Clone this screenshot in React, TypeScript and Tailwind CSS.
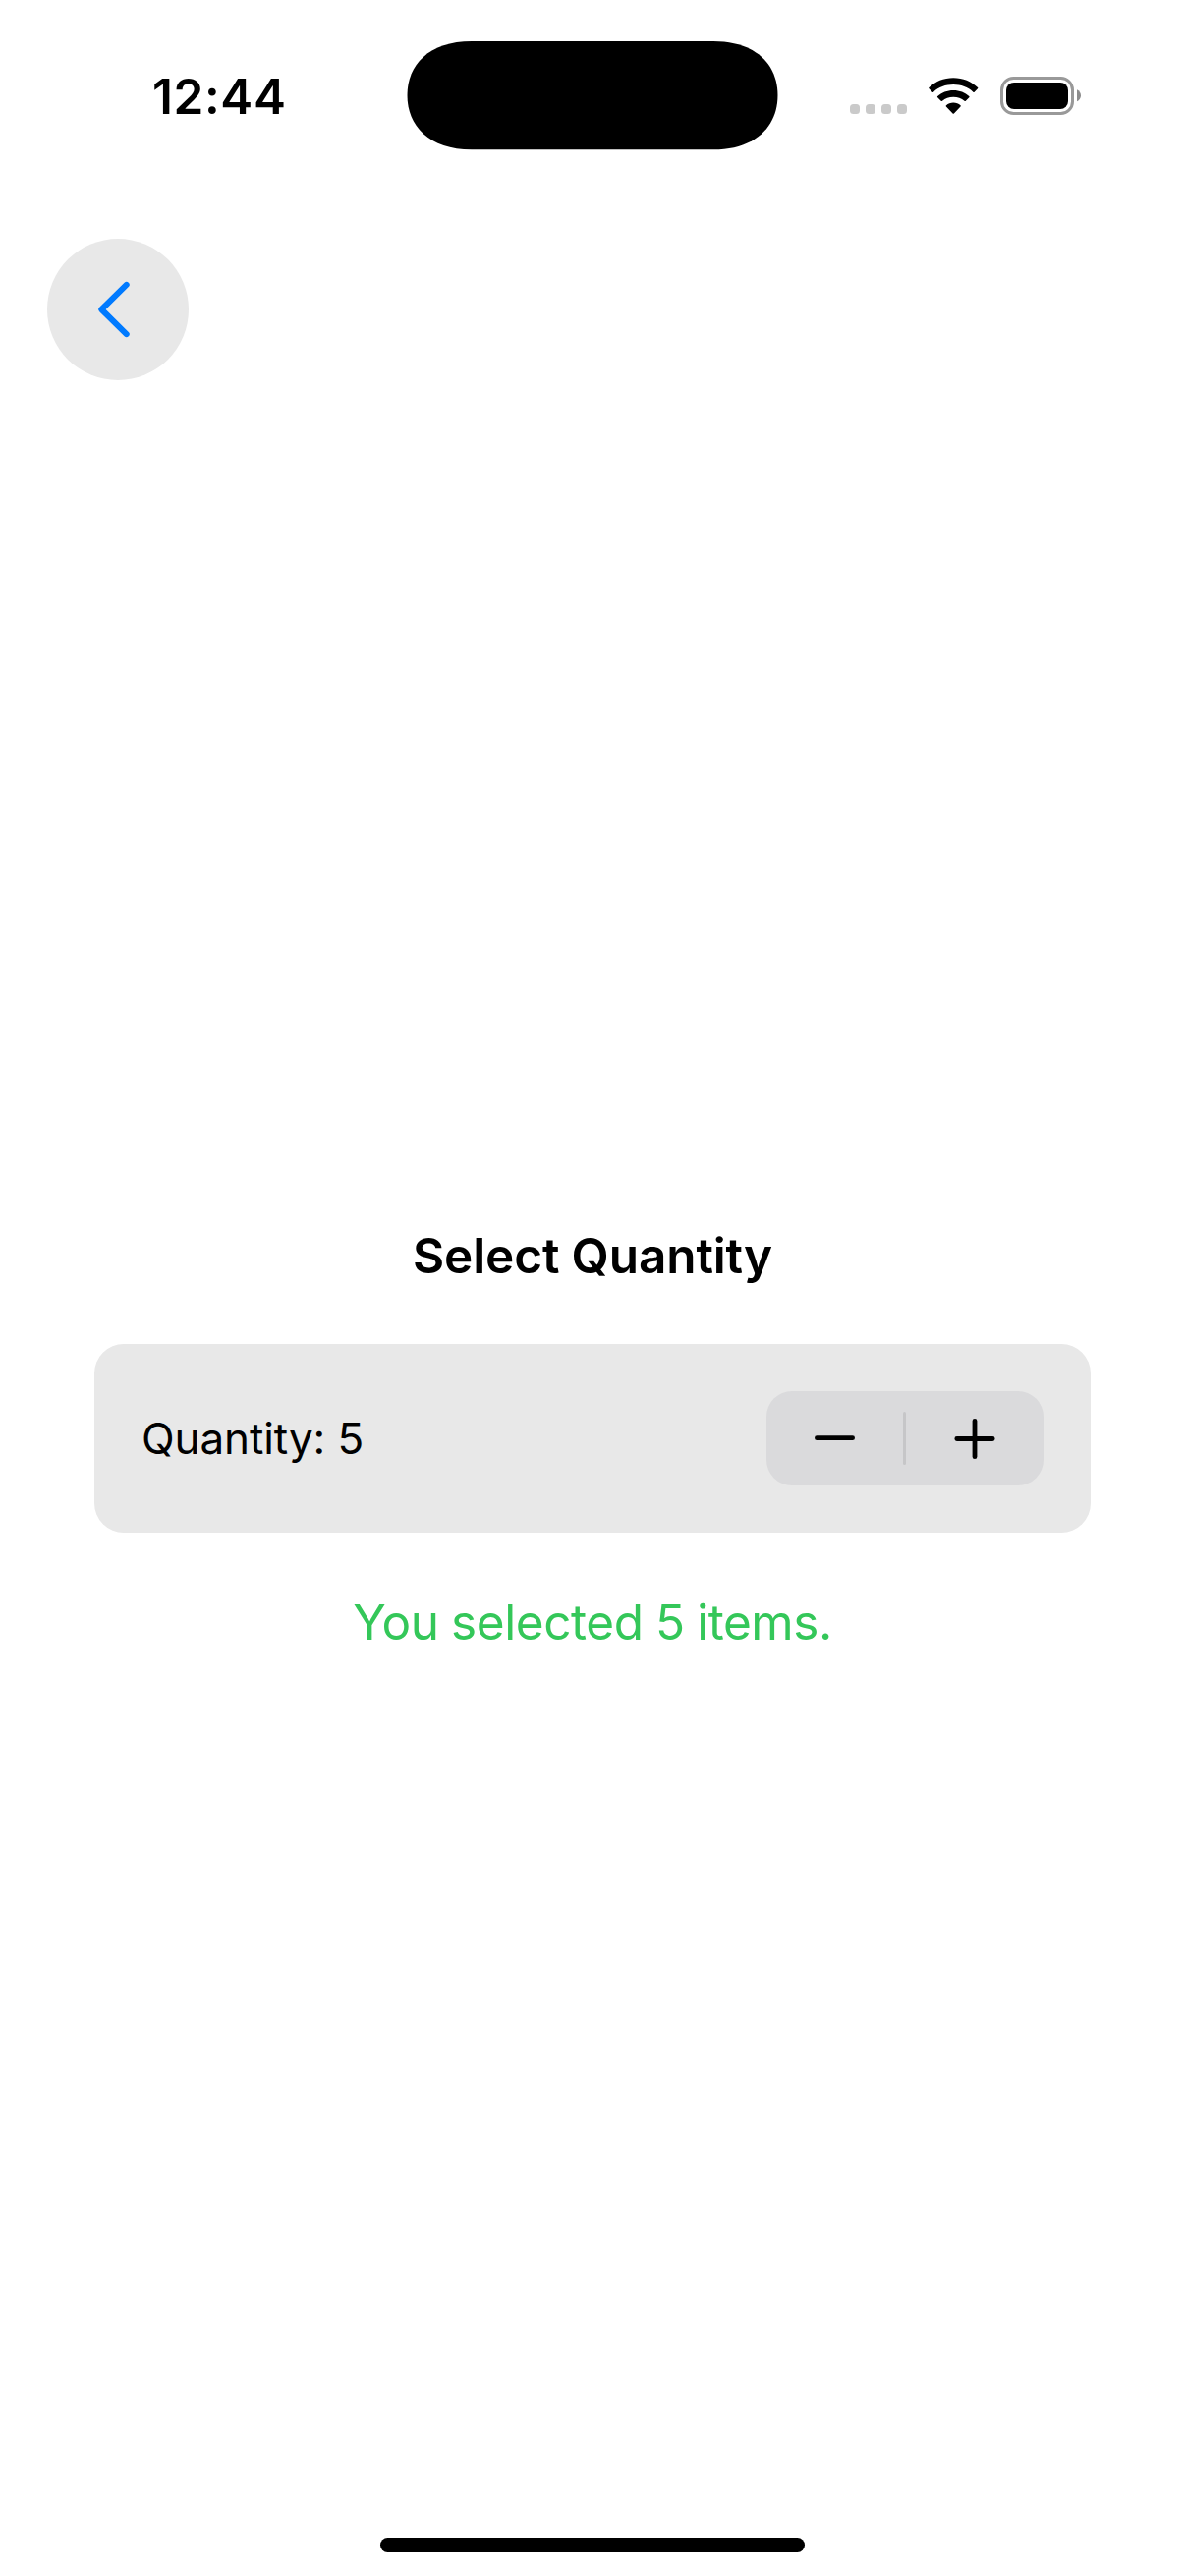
import { useState } from "react";

function SignalDots() {
  return (
    <div className="mt-[27px] flex gap-[6px]">
      {[0, 1, 2, 3].map((dot) => (
        <span key={dot} className="size-[10px] rounded-[3.5px] bg-[#cacaca]" />
      ))}
    </div>
  );
}

function WifiIcon() {
  return (
    <svg width="51" height="39" viewBox="0 -0.6 51 39" fill="#000">
      <path d="M25.2 0.7C35 0.7 43.7 4.4 50 10.5Q50.6 11.1 50 11.7L46.6 15.1Q46 15.7 45.4 15.1C40.1 10.2 33 7.5 25.2 7.5S10.3 10.2 5 15.1Q4.4 15.7 3.8 15.1L0.5 11.7Q-0.1 11.1 0.5 10.5C6.8 4.4 15.4 0.7 25.2 0.7Z" />
      <path d="M25.2 13.4C31.5 13.4 37.2 15.7 41.3 19.4Q42 20 41.3 20.7L37.8 24.1Q37.2 24.7 36.5 24.1C33.5 21.6 29.6 20.2 25.2 20.2S17 21.6 14 24.1Q13.3 24.7 12.7 24.1L9.2 20.7Q8.5 20 9.2 19.4C13.3 15.7 19 13.4 25.2 13.4Z" />
      <path d="M25.2 26C28.1 26 30.6 27 32.5 28.6Q33.2 29.2 32.5 29.9L25.9 36.9Q25.2 37.6 24.6 36.9L17.9 29.9Q17.3 29.2 18 28.6C19.9 27 22.4 26 25.2 26Z" />
    </svg>
  );
}

function BatteryIcon() {
  return (
    <svg width="83" height="39" viewBox="0 0 83 39">
      <rect x="1.5" y="1.5" width="72" height="36" rx="12" fill="none" stroke="#999" strokeWidth="3" />
      <rect x="6" y="6" width="63" height="27" rx="8" fill="#000" />
      <path d="M78 13.3C80.5 14.5 82 16.8 82 19.3S80.5 24.1 78 25.3Z" fill="#8c8c8c" />
    </svg>
  );
}

function StatusBar() {
  return (
    <header className="grid h-[195px] grid-cols-[414px_378px_414px] items-center">
      <div className="pl-[155px] pt-px text-[49.5px] font-semibold leading-[60px] tracking-[0.6px]">12:44</div>
      <svg width="378" height="112" viewBox="0 0 378 112" className="-mt-px">
        <path
          d="M0.5 56C0.5 25 22.5 1 66 1H312C355.5 1 377.5 25 377.5 56S355.5 111.300 312 111.300H66C22.5 111.300 0.5 87 0.5 56Z"
          fill="#000"
        />
      </svg>
      <div className="flex items-center pl-[73px]">
        <SignalDots />
        <div className="ml-[22px]">
          <WifiIcon />
        </div>
        <div className="ml-[22px]">
          <BatteryIcon />
        </div>
      </div>
    </header>
  );
}

export default function App() {
  const [quantity, setQuantity] = useState(5);

  return (
    <div className="flex h-[2622px] w-[1206px] flex-col bg-white font-['Inter',sans-serif] text-black">
      <StatusBar />

      <nav className="px-12 pt-12">
        <button aria-label="Back" className="flex size-36 items-center justify-center rounded-full bg-[#e8e8e8]">
          <svg width="144" height="144" viewBox="0 0 144 144" fill="none" stroke="#007aff" strokeWidth="6" strokeLinecap="round" strokeLinejoin="round">
            <path d="M80.7 46.9L55.3 72L80.7 97.1" />
          </svg>
        </button>
      </nav>

      <main className="flex flex-col gap-[60px] px-24 pt-[861px]">
        <h1 className="text-center text-[49.5px] font-semibold leading-[60px] tracking-[-0.12px]">Select Quantity</h1>

        <section className="flex h-48 items-center justify-between rounded-[30px] bg-[#e8e8e8] px-12">
          <span className="text-[44px] leading-[60px] tracking-[-0.1px]">Quantity: {quantity}</span>
          <div className="flex h-24 w-[282px] items-center rounded-[26px] bg-[#dadadc]">
            <button aria-label="Decrement" onClick={() => setQuantity(Math.max(0, quantity - 1))} className="h-24 w-[139px]">
              <svg width="139" height="96" viewBox="0 0 139 96" stroke="#000" strokeWidth="4.8" strokeLinecap="round">
                <path d="M51.4 47.7H87.6" />
              </svg>
            </button>
            <span className="h-[54px] w-[3px] rounded-full bg-[#c6c6c8]" />
            <button aria-label="Increment" onClick={() => setQuantity(quantity + 1)} className="h-24 w-[140px]">
              <svg width="140" height="96" viewBox="0 0 140 96" stroke="#000" strokeWidth="4.8" strokeLinecap="round">
                <path d="M51.8 48.5H88.2M70 30.3V66.7" />
              </svg>
            </button>
          </div>
        </section>

        <p className="text-center text-[49.5px] leading-[62px] tracking-[-0.45px] text-[#34c759] [word-spacing:-1px]">
          You selected {quantity} items.
        </p>
      </main>

      <footer className="mt-auto flex justify-center pb-6">
        <div className="h-[15px] w-[432px] rounded-full bg-black" />
      </footer>
    </div>
  );
}
